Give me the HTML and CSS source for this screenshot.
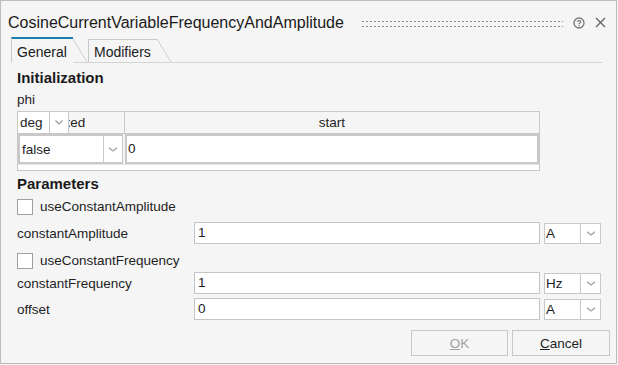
FILE: index.html
```html
<!DOCTYPE html>
<html lang="en">
  <head>
    <meta charset="UTF-8" />
    <title>CosineCurrentVariableFrequencyAndAmplitude</title>
    <link rel="stylesheet" href="styles.css">
  </head>
  <body>
    <div class="window">
      <div class="titlebar">
        <span class="title">CosineCurrentVariableFrequencyAndAmplitude</span>
        <span class="grip"></span>
        <svg class="help" width="12" height="12" viewBox="0 0 12 12">
          <circle cx="6" cy="6" r="5" fill="none" stroke="#777" stroke-width="1.3" />
          <path d="M4.3 4.8 C4.3 3.2 7.7 3.2 7.7 4.8 C7.7 6 6 5.9 6 7.2" fill="none" stroke="#777" stroke-width="1.2" />
          <circle cx="6" cy="8.8" r="0.75" fill="#777" />
        </svg>
        <svg class="close" width="11" height="11" viewBox="0 0 11 11">
          <path d="M1 1 L10 10 M10 1 L1 10" stroke="#666" stroke-width="1.4" />
        </svg>
      </div>

      <div class="tabs">
        <div class="tab active">General</div>
        <div class="tab">Modifiers</div>
        <div class="tab-fill"></div>
      </div>

      <div class="panel">
        <div class="heading">Initialization</div>
        <div class="var-name">phi</div>
        <div class="table">
          <div class="th first">
            fixed
            <div class="combo unit-over">
              <span class="combo-text">deg</span>
              <span class="combo-arrow thin">
                <svg width="8" height="5" viewBox="0 0 8 5"><path d="M0.5 0.5 L4 4 L7.5 0.5" fill="none" stroke="#999" stroke-width="1.2" /></svg>
              </span>
            </div>
          </div>
          <div class="th">start</div>
          <div class="td first">
            <div class="combo bool">
              <span class="combo-text">false</span>
              <span class="combo-arrow">
                <svg width="8" height="5" viewBox="0 0 8 5"><path d="M0 0 L4 3 L8 0 L8 1.8 L4 4.8 L0 1.8Z" fill="#a6a6a6" /></svg>
              </span>
            </div>
          </div>
          <div class="td"><div class="cell-field">0</div></div>
          <div class="strip"></div>
        </div>

        <div class="heading params">Parameters</div>

        <label class="check-row first-check">
          <span class="checkbox"></span>useConstantAmplitude
        </label>
        <div class="param-row row-amp">
          <span class="param-label">constantAmplitude</span>
          <div class="field">1</div>
          <div class="combo unit">
            <span class="combo-text">A</span>
            <span class="combo-arrow">
              <svg width="8" height="5" viewBox="0 0 8 5"><path d="M0 0 L4 3 L8 0 L8 1.8 L4 4.8 L0 1.8Z" fill="#a6a6a6" /></svg>
            </span>
          </div>
        </div>
        <label class="check-row second-check">
          <span class="checkbox"></span>useConstantFrequency
        </label>
        <div class="param-row row-freq">
          <span class="param-label">constantFrequency</span>
          <div class="field">1</div>
          <div class="combo unit">
            <span class="combo-text">Hz</span>
            <span class="combo-arrow">
              <svg width="8" height="5" viewBox="0 0 8 5"><path d="M0 0 L4 3 L8 0 L8 1.8 L4 4.8 L0 1.8Z" fill="#a6a6a6" /></svg>
            </span>
          </div>
        </div>
        <div class="param-row row-offset">
          <span class="param-label">offset</span>
          <div class="field">0</div>
          <div class="combo unit">
            <span class="combo-text">A</span>
            <span class="combo-arrow">
              <svg width="8" height="5" viewBox="0 0 8 5"><path d="M0 0 L4 3 L8 0 L8 1.8 L4 4.8 L0 1.8Z" fill="#a6a6a6" /></svg>
            </span>
          </div>
        </div>
      </div>

      <div class="buttons">
        <button class="btn disabled"><u>O</u>K</button>
        <button class="btn"><u>C</u>ancel</button>
      </div>
    </div>
  </body>
</html>
```

FILE: styles.css
```css
* {
  box-sizing: border-box;
  margin: 0;
  padding: 0;
}
body {
  font-family: "Liberation Sans", Arial, sans-serif;
  font-size: 13.5px;
  color: #1e1e1e;
  background: #f5f5f5;
}
.window {
  width: 617px;
  height: 364px;
  border: 1px solid #bdbdbd;
  background: #f5f5f5;
  display: flex;
  flex-direction: column;
}

/* title bar */
.titlebar {
  height: 36px;
  padding: 7px 10px 0 7px;
  display: flex;
  align-items: center;
}
.title {
  font-size: 16px;
  line-height: 20px;
  color: #1a1a1a;
  white-space: nowrap;
}
.grip {
  flex: 1;
  height: 8px;
  margin: 0 10px 0 17px;
  background-image: radial-gradient(circle, #8c8c8c 0.9px, transparent 1.1px);
  background-size: 4px 5px;
  background-position: 0 0;
}
.help {
  margin-right: 10px;
}

/* tabs */
.tabs {
  display: flex;
  align-items: flex-end;
  height: 26px;
  margin: 0 14px 0 10px;
  border-bottom: 1px solid #d4d4d4;
}
.tab {
  position: relative;
  font-size: 14px;
  line-height: 16px;
  padding: 4px 0 2px 5px;
  border-left: 1px solid #c8c8c8;
  border-top: 1px solid #c8c8c8;
  margin-right: 15px;
  width: 69px;
  color: #1a1a1a;
}
.tab::after {
  content: "";
  position: absolute;
  top: -1px;
  left: 100%;
  width: 14px;
  height: calc(100% + 1px);
  background: linear-gradient(
    to top right,
    transparent calc(50% - 0.7px),
    #c8c8c8 50%,
    transparent calc(50% + 0.7px)
  );
}
.tab.active {
  width: 62px;
  border-top: 2px solid #1b7fae;
  padding-top: 5px;
  border-bottom: 1px solid #f5f5f5;
  margin-bottom: -1px;
  margin-right: 15px;
}
.tab.active::after {
  top: 0;
  height: 100%;
  background: linear-gradient(
      to top right,
      transparent calc(50% - 0.7px),
      #c8c8c8 50%,
      transparent calc(50% + 0.7px)
    ),
    linear-gradient(#f5f5f5, #f5f5f5) bottom / 100% 1px no-repeat;
}
.tab-fill {
  flex: 1;
}

/* panel */
.panel {
  flex: 1;
  padding: 0 14px 0 16px;
}
.heading {
  font-weight: bold;
  font-size: 15px;
  line-height: 18px;
  margin-top: 6px;
  color: #1a1a1a;
}
.heading.params {
  margin-top: 4px;
}
.var-name {
  line-height: 16px;
  margin-top: 5px;
}

/* start value table */
.table {
  position: relative;
  width: 523px;
  margin-top: 3px;
  border: 1px solid #c8c8c8;
  display: grid;
  grid-template-columns: 107px 1fr;
}
.th {
  height: 22px;
  line-height: 21px;
  text-align: center;
  border-bottom: 1px solid #c8c8c8;
  position: relative;
}
.th.first {
  border-right: 1px solid #c8c8c8;
}
.td {
  height: 30px;
}
.td.first {
  padding-right: 2px;
}
.strip {
  grid-column: 1 / 3;
  height: 6px;
  background: #fff;
  border-top: 1px solid #e4e4e4;
}
.cell-field {
  height: 30px;
  background: #fff;
  border: 2px solid #c8c8c8;
  padding-left: 1px;
  line-height: 26px;
}

/* combo boxes */
.combo {
  display: flex;
  background: #fff;
  border: 1px solid #c8c8c8;
}
.combo-text {
  flex: 1;
  padding-left: 2px;
}
.combo-arrow {
  display: flex;
  align-items: center;
  justify-content: center;
  width: 20px;
  border-left: 1px solid #c8c8c8;
  background: #fff;
}
.unit-over {
  position: absolute;
  left: -1px;
  top: -1px;
  width: 52px;
  height: 23px;
  line-height: 21px;
  text-align: left;
}
.combo-arrow.thin {
  width: 19px;
}
.bool {
  height: 30px;
  line-height: 28px;
  border-width: 2px 1px 2px 2px;
}
.bool .combo-arrow {
  width: 19px;
}
.unit {
  width: 57px;
  height: 21px;
  line-height: 19px;
  margin-left: 4px;
}
.unit .combo-text {
  padding-left: 1px;
}

/* parameter rows */
.check-row {
  display: flex;
  align-items: center;
  height: 16px;
  line-height: 16px;
}
.first-check {
  margin-top: 6px;
}
.second-check {
  margin-top: 9px;
}
.checkbox {
  width: 16px;
  height: 16px;
  border: 1px solid #a0a0a0;
  background: #fff;
  margin-right: 7px;
}
.param-row {
  display: flex;
  align-items: center;
  height: 22px;
}
.row-amp {
  margin-top: 7px;
}
.row-freq {
  margin-top: 3px;
}
.row-offset {
  margin-top: 4px;
}
.param-label {
  width: 177px;
}
.field {
  width: 346px;
  height: 22px;
  line-height: 20px;
  background: #fff;
  border: 1px solid #c4c4c4;
  padding-left: 3px;
}

/* buttons */
.buttons {
  display: flex;
  justify-content: flex-end;
  gap: 4px;
  padding: 0 6px 7px 0;
}
.btn {
  width: 97px;
  height: 26px;
  font-family: inherit;
  font-size: 13.5px;
  color: #1e1e1e;
  background: #f5f5f5;
  border: 1px solid #c8c8c8;
}
.btn + .btn {
  width: 98px;
}
.btn.disabled {
  color: #a3a3a3;
}
```
